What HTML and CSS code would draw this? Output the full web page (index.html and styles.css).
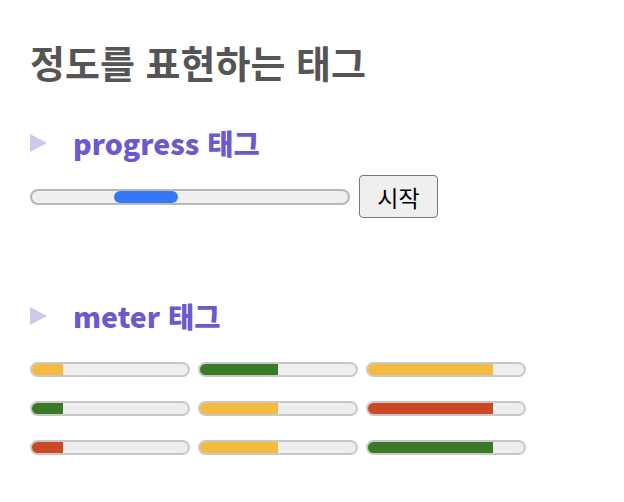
FILE: index.html
```html
<!DOCTYPE html>
<html lang="ko">
<head>
<meta charset="utf-8">
<link rel="stylesheet" href="styles.css">
</head>
<body>
<h1 class="title">정도를 표현하는 태그</h1>
<section class="section">
  <h2 class="sub">progress 태그</h2>
  <div class="progress-row">
    <div class="progress"><div class="pill"></div></div>
    <button class="btn" type="button">시작</button>
  </div>
</section>
<section class="section meters-section">
  <h2 class="sub">meter 태그</h2>
  <div class="meters">
    <div class="m"><div class="fill yellow" style="width:20%"></div></div>
    <div class="m"><div class="fill green" style="width:50%"></div></div>
    <div class="m"><div class="fill yellow" style="width:80%"></div></div>
    <div class="m"><div class="fill green" style="width:20%"></div></div>
    <div class="m"><div class="fill yellow" style="width:50%"></div></div>
    <div class="m"><div class="fill red" style="width:80%"></div></div>
    <div class="m"><div class="fill red" style="width:20%"></div></div>
    <div class="m"><div class="fill yellow" style="width:50%"></div></div>
    <div class="m"><div class="fill green" style="width:80%"></div></div>
  </div>
</section>
</body>
</html>
```
FILE: styles.css
```css
html, body {
  background: #fff;
}
body {
  margin: 0;
  padding: 0 30px;
  font-family: "Noto Sans CJK KR", "Noto Sans", sans-serif;
}
.title {
  margin: 38px 0 0;
  font-size: 38px;
  line-height: 48px;
  font-weight: 700;
  color: #555;
}
.section {
  margin-top: 39px;
}
.meters-section {
  margin-top: 80px;
}
.sub {
  margin: 0;
  display: flex;
  align-items: center;
  font-size: 28.5px;
  line-height: 36px;
  font-weight: 900;
  color: #6a5acd;
}
.sub::before {
  content: "";
  width: 0;
  height: 0;
  border-left: 17px solid #cdc8ec;
  border-top: 9px solid transparent;
  border-bottom: 9px solid transparent;
  margin-right: 26px;
}
.progress-row {
  display: flex;
  align-items: center;
  gap: 9px;
  margin-top: 14px;
}
.progress {
  box-sizing: border-box;
  width: 320px;
  height: 16px;
  border: 2px solid #b8b8b8;
  border-radius: 8px;
  background: #efefef;
  position: relative;
  overflow: hidden;
}
.pill {
  position: absolute;
  left: 82px;
  top: 0;
  width: 64px;
  height: 100%;
  border-radius: 7px;
  background: #3478f6;
}
.btn {
  box-sizing: border-box;
  width: 79px;
  height: 43px;
  font-family: "Noto Sans CJK KR", sans-serif;
  font-size: 23px;
  color: #000;
  background: #efefef;
  border: 1px solid #767676;
  border-radius: 4px;
  padding: 0;
}
.meters {
  display: grid;
  grid-template-columns: repeat(3, 160px);
  column-gap: 8px;
  row-gap: 24px;
  margin-top: 28px;
}
.m {
  box-sizing: border-box;
  width: 160px;
  height: 15px;
  border: 2px solid #c8c8c8;
  border-radius: 8px;
  background: #eeeeee;
  overflow: hidden;
}
.fill {
  height: 100%;
}
.yellow { background: #f4bb41; }
.green { background: #3a7a26; }
.red { background: #c94a24; }
```
